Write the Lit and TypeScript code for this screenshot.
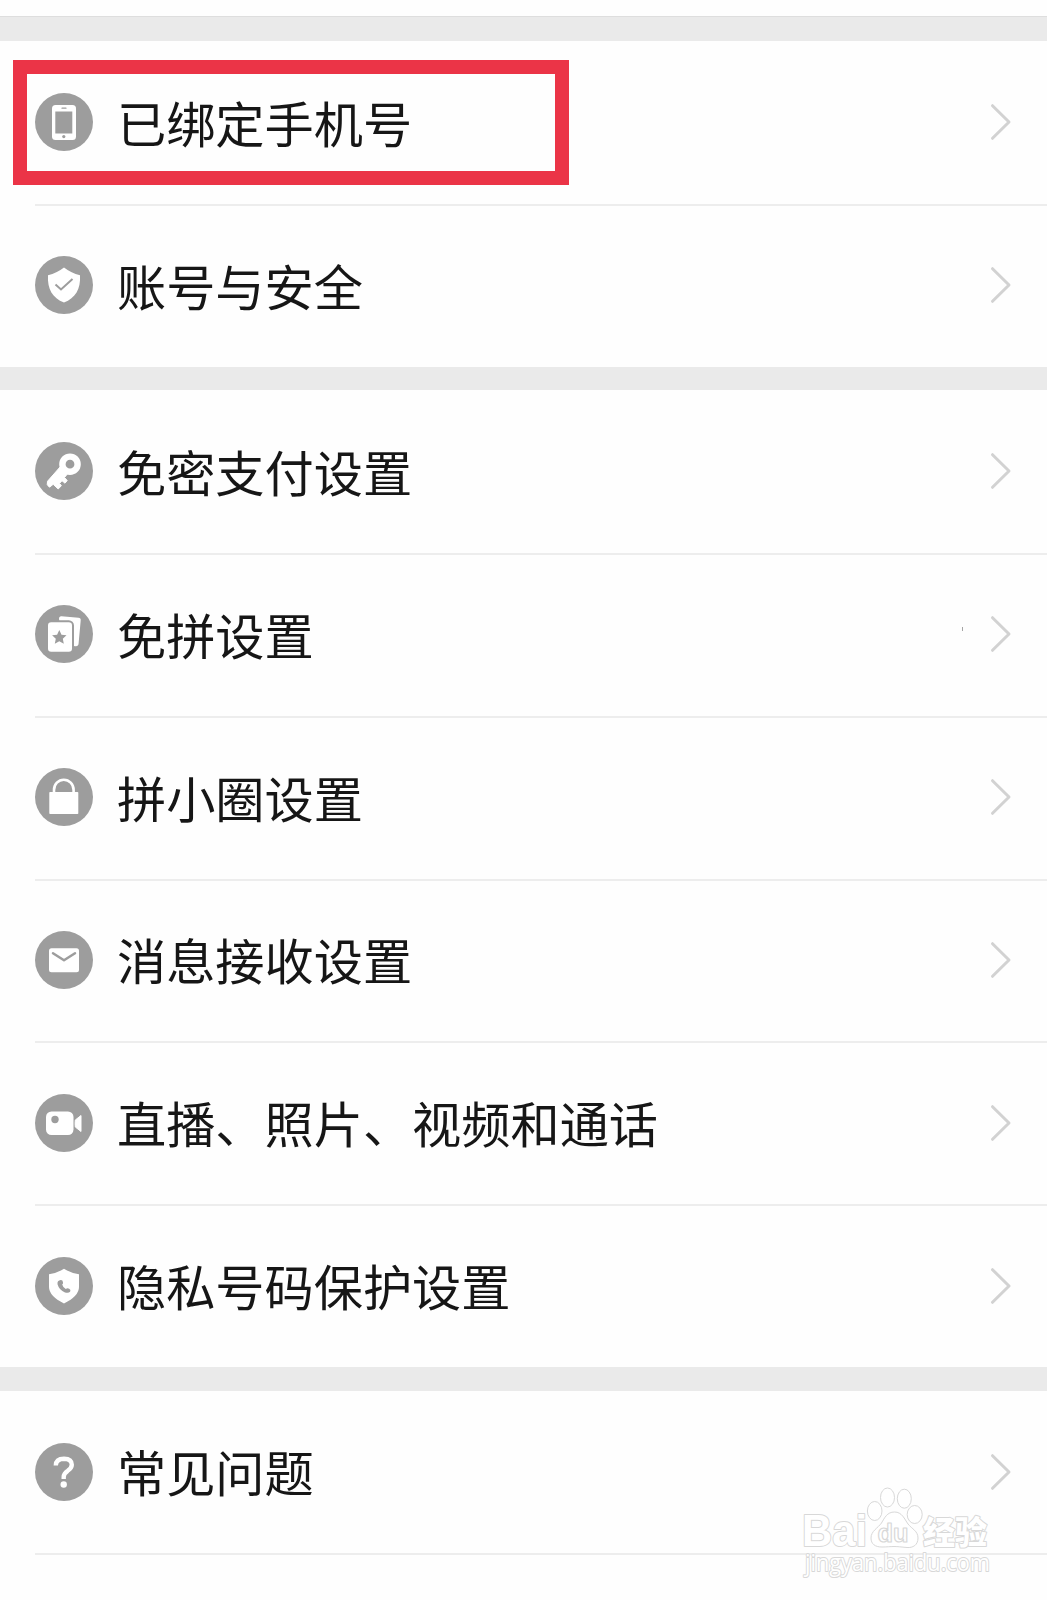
import { LitElement, html, svg, css } from "lit";
import { customElement, property } from "lit/decorators.js";

const glyphs: Record<string, unknown> = {
  phone: svg`<rect x="17" y="12" width="24" height="35" rx="3.5" fill="#fff"/><rect x="20.3" y="18.5" width="17" height="22" fill="#9d9d9d"/><path d="M27 15.2h4" stroke="#9d9d9d" stroke-width="1.2" stroke-linecap="round"/><circle cx="28.8" cy="43.6" r="1.6" fill="#9d9d9d"/>`,
  shield: svg`<path d="M29 11.5Q36 17 45 19.2C45.8 33 40.500 42 29 46.500C17.500 42 12.200 33 13 19.200Q22 17 29 11.500Z" fill="#fff"/><path d="M20.500 28.500l5.500 5L37.500 23" fill="none" stroke="#9d9d9d" stroke-width="2"/>`,
  key: svg`<circle cx="35" cy="22.200" r="7.600" fill="none" stroke="#fff" stroke-width="6.400"/><path d="M25.500 24.500L12.500 39.300Q11 43 14.500 45.200L18.200 42.300L23.200 47L26.400 43.700L24.500 41.400L27 38.700L30 41.200L32.200 38.500L29.500 35.500L33 31.200Z" fill="#fff" stroke="#fff" stroke-width="1" stroke-linejoin="round"/>`,
  cards: svg`<path d="M26.500 11.200L43.500 12.800Q46 13 45.700 15.500L43.600 38.500Q43.300 41.500 40.500 41.200L30 40L24 14Q24 11 26.500 11.200Z" fill="#fff"/><rect x="12" y="16.200" width="26" height="31.500" rx="4.200" fill="#fff" stroke="#9d9d9d" stroke-width="2"/><path d="M24.300 25l2.200 4.700 5 .6-3.700 3.500 1 5-4.500-2.500-4.500 2.500 1-5-3.700-3.500 5-.6z" fill="#9d9d9d"/>`,
  lock: svg`<path d="M19 25.500V22a9.800 10.300 0 0 1 19.600 0V25.500" fill="none" stroke="#fff" stroke-width="2.600"/><rect x="14.300" y="24" width="29" height="22" rx=".8" fill="#fff"/>`,
  mail: svg`<rect x="14" y="17.200" width="30" height="24" rx="2.500" fill="#fff"/><path d="M18 22.200L29 29.300L40 22.200" fill="none" stroke="#9d9d9d" stroke-width="2.500" stroke-linecap="round" stroke-linejoin="round"/>`,
  camera: svg`<rect x="11" y="17.500" width="27.500" height="23.500" rx="5.500" fill="#fff"/><circle cx="20" cy="25.500" r="3.700" fill="#9d9d9d"/><path d="M46 21.500V37.500L40.300 33Q39.800 29.500 40.300 26Z" fill="#fff" stroke="#fff" stroke-linejoin="round"/>`,
  guard: svg`<path d="M29 11.800Q35.500 16 44 17.200V30Q44 39 29 46.500Q14 39 14 30V17.200Q22.500 16 29 11.800Z" fill="#fff"/><path d="M25.800 23Q27.700 22.900 28 25.200Q28.300 26.800 27.200 27.600Q27.800 30.300 30.800 32.100Q32.300 30.700 34.200 31.800Q36.200 33 35.100 34.700Q33.500 36.600 30 35.400Q24.200 33.200 22.500 27.200Q22 23.600 25.800 23Z" fill="#9d9d9d"/>`,
  question: svg`<path d="M20.800 22.500Q21 15.700 29 15.700Q36.800 15.900 36.800 21.800Q36.800 25 32.700 27.800Q28.700 30.400 28.700 34V36" fill="none" stroke="#fff" stroke-width="4.400"/><circle cx="28.700" cy="41.500" r="3.200" fill="#fff"/>`,
};

@customElement("settings-row")
class SettingsRow extends LitElement {
  @property() icon = "";
  @property() label = "";
  @property({ type: Boolean }) marked = false;

  static styles = css`
    :host { display: flex; position: relative; box-sizing: border-box; height: 162.9px; padding: 0 34.5px 0 35px; align-items: center; }
    .icon { width: 58px; height: 58px; flex: none; }
    .label { flex: 1; margin-left: 24px; padding-bottom: 1px; font-size: 49.2px; line-height: 70px; color: #161616; white-space: nowrap; }
    .chevron { width: 24px; height: 40px; flex: none; }
    .mark { position: absolute; left: 13px; top: 19px; width: 556px; height: 125px; box-sizing: border-box; border: 14px solid #eb3447; }
  `;

  render() {
    return html`
      <svg class="icon" viewBox="0 0 58 58"><circle cx="29" cy="29" r="29" fill="#9d9d9d"/>${glyphs[this.icon]}</svg>
      <span class="label">${this.label}</span>
      <svg class="chevron" viewBox="0 0 24 40"><path d="M3.500 3.700L20 20L3.500 36.300" fill="none" stroke="#d2d2d2" stroke-width="3" stroke-linecap="round" stroke-linejoin="round"/></svg>
      ${this.marked ? html`<div class="mark"></div>` : ""}
    `;
  }
}

const groups = [
  [["phone", "已绑定手机号"], ["shield", "账号与安全"]],
  [["key", "免密支付设置"], ["cards", "免拼设置"], ["lock", "拼小圈设置"], ["mail", "消息接收设置"], ["camera", "直播、照片、视频和通话"], ["guard", "隐私号码保护设置"]],
  [["question", "常见问题"]],
];

@customElement("app-root")
class AppRoot extends LitElement {
  static styles = css`
    :host { display: block; position: relative; box-sizing: border-box; height: 1600px; padding-top: 16px; overflow: hidden; background: #fefefe; font-family: "Noto Sans CJK SC", sans-serif; }
    .band { height: 23.300px; background: #eaeaea; }
    .band.first { height: 24.800px; box-sizing: border-box; border-top: 1px solid #dedede; }
    .line { height: 2px; margin: 0 0 -2px 35px; background: #ededed; }
    .speck { position: absolute; left: 962px; top: 627px; width: 1px; height: 4px; background: #a5a5a5; }
    .watermark { position: absolute; left: 780px; top: 1480px; width: 267px; height: 120px; }
    .watermark text { paint-order: stroke; stroke-width: 2px; stroke-linejoin: round; }
    .watermark .paw-text { paint-order: normal; stroke-width: 1.2px; }
  `;

  render() {
    return html`
      ${groups.map((rows, g) => html`
        <div class="band ${g === 0 ? "first" : ""}"></div>
        ${rows.map(([icon, label], i) => html`
          <settings-row .icon=${icon} .label=${label} .marked=${icon === "phone"}></settings-row>
          ${i < rows.length - 1 || g === groups.length - 1 ? html`<div class="line"></div>` : ""}
        `)}
      `)}
      <div class="speck"></div>
      <svg class="watermark" viewBox="0 0 267 120" fill="#fff" stroke="#d8d8d8" stroke-width="1">
        <text x="22" y="66" font-family="Liberation Sans" font-weight="700" font-size="43.500" textLength="65" lengthAdjust="spacingAndGlyphs">Bai</text>
        <ellipse cx="94.700" cy="31" rx="7.300" ry="9.500"/>
        <ellipse cx="107.500" cy="17.500" rx="7" ry="9.500"/>
        <ellipse cx="124.300" cy="18.700" rx="7" ry="9.500"/>
        <ellipse cx="134.700" cy="34.500" rx="7.500" ry="9"/>
        <path d="M114.500 32C122 32 124.500 39 128 44C132 49 138 51 138 58C138 65 133 68 127 67.500C121 67 118 66.500 114 66.500C110 66.500 107 67 102 67C95 67 91 64 91 58C91 51 98 48 101.500 43C104.500 38 107 32 114.500 32Z"/>
        <text class="paw-text" x="97.500" y="61.500" font-family="Liberation Sans" font-weight="700" font-size="26" textLength="31" lengthAdjust="spacingAndGlyphs">du</text>
        <text x="143" y="64" font-size="32" font-weight="900" font-family="Noto Sans CJK SC" textLength="64">经验</text>
        <text x="25" y="91" font-family="Open Sans" font-size="24" textLength="185" lengthAdjust="spacingAndGlyphs">jingyan.baidu.com</text>
      </svg>
    `;
  }
}
